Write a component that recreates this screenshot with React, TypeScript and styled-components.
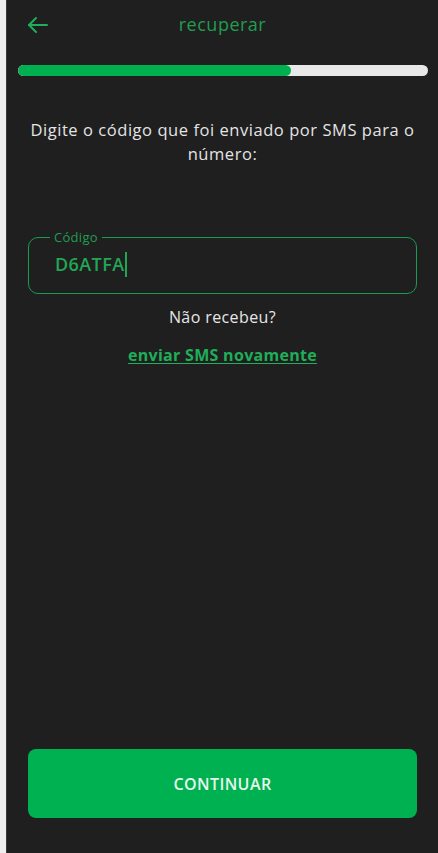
import React from 'react';
import styled, {createGlobalStyle} from 'styled-components';

const GlobalStyle = createGlobalStyle`
  html, body {
    margin: 0;
    padding: 0;
    background: #eeeeee;
  }
  * {
    box-sizing: border-box;
  }
`;

const Screen = styled.div`
  margin-left: 6px;
  width: 432px;
  height: 853px;
  background: #1f1f1f;
  border-left: 1px solid #3a3a3a;
  font-family: "Open Sans", "Liberation Sans", sans-serif;
  display: flex;
  flex-direction: column;
  padding: 0 0 35px;
`;

const Header = styled.div`
  height: 48px;
  display: flex;
  align-items: center;
  justify-content: center;
  position: relative;
`;

const BackButton = styled.button`
  position: absolute;
  left: 19px;
  top: 13px;
  background: none;
  border: none;
  padding: 0;
  display: flex;
  cursor: pointer;
`;

const Title = styled.h1`
  margin: 0;
  font-size: 18px;
  font-weight: 500;
  color: #1f9d50;
  letter-spacing: 0.5px;
`;

const Track = styled.div`
  margin: 17px 10px 0 11px;
  height: 11px;
  border-radius: 6px;
  background: #e8e8e8;
  overflow: hidden;
`;

const Fill = styled.div`
  height: 100%;
  background: #00b050;
  border-radius: 6px;
`;

const Message = styled.p`
  margin: 42px 14px 0;
  text-align: center;
  color: #e4e4e4;
  font-size: 16.5px;
  line-height: 24px;
  letter-spacing: 0.55px;
`;

const Field = styled.div`
  position: relative;
  margin: 71px 21px 0 21px;
  height: 57px;
  border: 1px solid #1c9a4d;
  border-radius: 10px;
  padding: 0 0 0 26px;
  display: flex;
  align-items: center;
`;

const Label = styled.span`
  position: absolute;
  left: 21px;
  top: -9px;
  background: #1f1f1f;
  color: #1f9d50;
  font-size: 13px;
  line-height: 16px;
  padding: 0 4px;
  letter-spacing: 0.3px;
`;

const Value = styled.div`
  display: flex;
  align-items: center;
  margin-top: -3px;
  color: #22a655;
  font-size: 18px;
  font-weight: 600;
  letter-spacing: 0.4px;
`;

const Caret = styled.span`
  display: inline-block;
  width: 2px;
  height: 25px;
  margin-left: 1px;
  background: #22a655;
`;

const Hint = styled.div`
  margin-top: 12px;
  text-align: center;
  color: #e6e6e6;
  font-size: 16px;
  line-height: 22px;
  letter-spacing: 0.4px;
`;

const Resend = styled.a`
  margin-top: 16px;
  align-self: center;
  color: #1fae59;
  font-size: 16px;
  font-weight: 700;
  line-height: 22px;
  letter-spacing: 0.3px;
  text-decoration: underline;
  text-underline-offset: 2px;
  cursor: pointer;
`;

const Spacer = styled.div`
  flex: 1;
`;

const PrimaryButton = styled.button`
  margin: 0 21px;
  height: 69px;
  border: none;
  border-radius: 8px;
  background: #00b152;
  color: #e8f7ec;
  font-family: inherit;
  font-size: 16px;
  font-weight: 600;
  letter-spacing: 0.4px;
  cursor: pointer;
`;

const ArrowLeft = () => (
    <svg width="24" height="24" viewBox="0 0 24 24" fill="none" stroke="#1fae59" strokeWidth="2" strokeLinecap="round" strokeLinejoin="round">
        <path d="M21 12H3"/>
        <path d="M10 5l-7 7 7 7"/>
    </svg>
);

const App = () => {
    const progress = 66.5;

    return (
        <>
            <GlobalStyle/>
            <Screen>
                <Header>
                    <BackButton aria-label="voltar"><ArrowLeft/></BackButton>
                    <Title>recuperar</Title>
                </Header>
                <Track>
                    <Fill style={{width: `${progress}%`}}/>
                </Track>
                <Message>Digite o código que foi enviado por SMS para o número:</Message>
                <Field>
                    <Label>Código</Label>
                    <Value>D6ATFA<Caret/></Value>
                </Field>
                <Hint>Não recebeu?</Hint>
                <Resend>enviar SMS novamente</Resend>
                <Spacer/>
                <PrimaryButton>CONTINUAR</PrimaryButton>
            </Screen>
        </>
    );
};

export default App;
